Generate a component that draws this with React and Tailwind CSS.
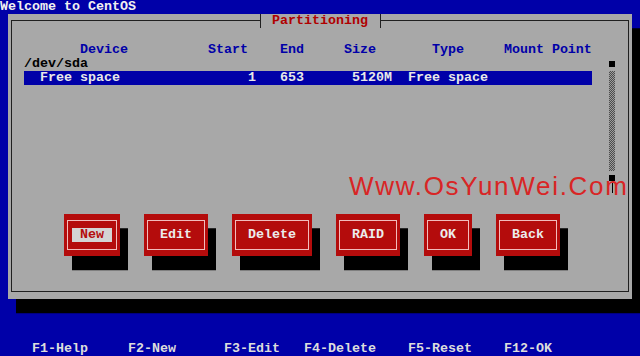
const sp = (n) => ' '.repeat(n)

const header =
  sp(8) + 'Device' + sp(10) + 'Start' + sp(4) + 'End' + sp(5) + 'Size' + sp(7) + 'Type' + sp(5) + 'Mount Point'

const freeRow =
  sp(2) + 'Free space' + sp(16) + '1' + sp(3) + '653' + sp(6) + '5120M' + sp(2) + 'Free space'

const footer =
  sp(4) + 'F1-Help' + sp(5) + 'F2-New' + sp(6) + 'F3-Edit' + sp(3) + 'F4-Delete' + sp(4) + 'F5-Reset' + sp(4) + 'F12-OK'

const buttons = [
  { label: 'New', width: 'w-[56px]', focused: true },
  { label: 'Edit', width: 'w-[64px]' },
  { label: 'Delete', width: 'w-[80px]' },
  { label: 'RAID', width: 'w-[64px]' },
  { label: 'OK', width: 'w-[48px]' },
  { label: 'Back', width: 'w-[64px]' },
]

function Scrollbar() {
  return (
    <div className="w-[8px] flex flex-col items-center">
      <div className="h-[28.48px]" />
      <div className="h-[14.24px] flex items-center justify-center">
        <div className="w-[6px] h-[6px] bg-black" />
      </div>
      <div className="h-[99.68px] w-[6px] bg-[image:repeating-conic-gradient(#4c4c4c_0_25%,#9c9c9c_0_50%)] bg-[length:2px_2px]" />
      <div className="h-[14.24px] flex items-center justify-center">
        <div className="w-[6px] h-[6px] bg-black" />
      </div>
      <div className="-mt-[2px] w-px h-[10px] bg-black" />
    </div>
  )
}

function Button({ label, width, focused }) {
  return (
    <div className={`${width} h-[42.72px] bg-[#b40c0c] shadow-[8px_14.24px_0_#000] flex flex-col px-[3px] py-[6px]`}>
      <div className="flex-1 border border-[#f2bcbc] flex items-center justify-center">
        {focused ? (
          <span className="bg-[#d4d4d4] text-[#b40c0c] px-[8px] h-[14.24px]">{label}</span>
        ) : (
          <span className="text-[#ececec] h-[14.24px]">{label}</span>
        )}
      </div>
    </div>
  )
}

export default function App() {
  return (
    <div className="relative w-[640px] h-[356px] overflow-hidden bg-[#0000a8] flex flex-col font-['Liberation_Mono',monospace] text-[13.33px] leading-[14.24px] font-bold">
      <div className="h-[14.24px] whitespace-pre text-[#f0f0f0]">Welcome to CentOS</div>

      <div className="relative ml-[8px] w-[624px] h-[284.8px] bg-[#a8a8a8] shadow-[8px_14.24px_0_#000] flex flex-col px-[3px] pt-[6px] pb-[7px]">
        <div className="absolute left-[252px] top-0 h-[14.24px] w-[121px] border-x border-[#202020] bg-[#a8a8a8] pl-[11px] text-[#b00000] whitespace-pre">
          Partitioning
        </div>

        <div className="flex-1 border border-[#202020] flex flex-col pl-[4px] pt-[7.24px]">
          <div className="flex h-[185.12px]">
            <div className="w-[592px] flex flex-col whitespace-pre">
              <div className="h-[14.24px]" />
              <div className="h-[14.24px] text-[#0000a8]">{header}</div>
              <div className="h-[14.24px] text-black"> /dev/sda</div>
              <div className="h-[14.24px] ml-[8px] w-[568px] bg-[#0000a8] text-[#e8e8e8]">{freeRow}</div>
            </div>
            <Scrollbar />
          </div>

          <div className="flex gap-[24px] pl-[48px]">
            {buttons.map((b) => (
              <Button key={b.label} {...b} />
            ))}
          </div>
        </div>
      </div>

      <div className="mt-auto h-[14.24px] whitespace-pre text-[#dcdcdc]">{footer}</div>

      <div className="absolute left-[349px] top-[173px] font-['Liberation_Sans',Arial,sans-serif] font-normal text-[26px] leading-[26px] tracking-[1.7px] text-[#d92525] whitespace-pre">
        Www.OsYunWei.Com
      </div>
    </div>
  )
}
